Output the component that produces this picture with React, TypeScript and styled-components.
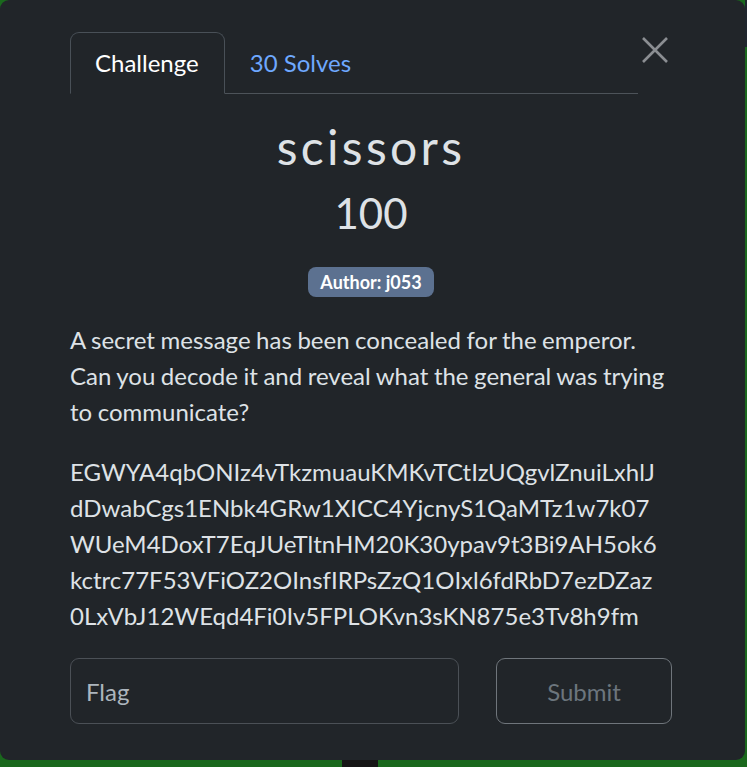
import React from "react";
import styled, { createGlobalStyle } from "styled-components";

const GlobalStyle = createGlobalStyle`
  html, body {
    margin: 0;
    padding: 0;
    background: #1a681d;
    font-family: Lato, "Open Sans", sans-serif;
    -webkit-font-smoothing: antialiased;
  }
  * { box-sizing: border-box; }
`;

const Stage = styled.div`
  display: grid;
  grid-template-columns: 745px 2px;
  grid-template-rows: 760px 7px;
  width: 747px;
  height: 767px;
  overflow: hidden;
`;

const SideShadow = styled.div`
  align-self: start;
  height: 47px;
  background: #1f262e;
`;

const BottomStrip = styled.div`
  grid-column: 1 / span 2;
  display: flex;
  background: #1a681d;
`;

const DarkBlock = styled.div`
  margin-left: 342px;
  width: 36px;
  background: #151515;
`;

const Modal = styled.div`
  background: #212529;
  border-radius: 9px;
  padding: 32px 73px 0 70px;
  color: #dee2e6;
  font-size: 24px;
  line-height: 36px;
`;

const Header = styled.div`
  display: flex;
  align-items: flex-start;
`;

const Tabs = styled.div`
  flex: 1;
  display: flex;
  border-bottom: 1px solid #4d5359;
`;

const Tab = styled.div<{ $active?: boolean }>`
  padding: 12px 25px 12px 24px;
  margin-bottom: -1px;
  border: 1px solid ${(p) => (p.$active ? "#495057" : "transparent")};
  border-bottom-color: ${(p) => (p.$active ? "#212529" : "transparent")};
  border-radius: 9px 9px 0 0;
  background: ${(p) => (p.$active ? "#212529" : "transparent")};
  color: ${(p) => (p.$active ? "#ffffff" : "#6ea8fe")};
  font-size: 24px;
  line-height: 36px;
`;

const CloseButton = styled.button`
  width: 34px;
  height: 34px;
  margin-top: 1px;
  padding: 0;
  border: none;
  background: transparent;
  display: flex;
  align-items: center;
  justify-content: center;
  cursor: pointer;
`;

const Title = styled.h2`
  margin: 0 0 12px;
  padding-top: 24px;
  text-align: center;
  font-size: 48px;
  font-weight: 400;
  line-height: 57.6px;
  letter-spacing: 3.3px;
  color: #dee2e6;
`;

const Value = styled.h3`
  margin: 0;
  text-align: center;
  font-size: 42px;
  font-weight: 400;
  line-height: 50.4px;
  color: #dee2e6;
`;

const BadgeRow = styled.div`
  display: flex;
  justify-content: center;
  margin-top: 29px;
`;

const Badge = styled.span`
  display: inline-block;
  height: 30px;
  padding: 0 12px;
  border-radius: 8px;
  background: #5c7190;
  color: #ffffff;
  font-size: 18px;
  font-weight: 700;
  line-height: 30px;
`;

const Paragraph = styled.p<{ $first?: boolean }>`
  margin: ${(p) => (p.$first ? "25px" : "0")} 0 24px;
  word-spacing: ${(p) => (p.$first ? "-0.6px" : "0")};
`;

const FormRow = styled.div`
  display: flex;
  gap: 37px;
`;

const FlagInput = styled.input`
  flex: 0 0 389px;
  height: 66px;
  padding: 0 15px;
  border: 1px solid #4b5056;
  border-radius: 9px;
  background: #212529;
  color: #dee2e6;
  font-family: Lato, sans-serif;
  font-size: 24px;
  outline: none;
  &::placeholder {
    color: #adb5bd;
  }
`;

const SubmitButton = styled.button`
  flex: 1;
  height: 66px;
  border: 1px solid #6f757b;
  border-radius: 9px;
  background: transparent;
  color: #6c757d;
  font-family: Lato, sans-serif;
  font-size: 24px;
`;

const flagLines = [
  "EGWYA4qbONIz4vTkzmuauKMKvTCtIzUQgvlZnuiLxhlJ",
  "dDwabCgs1ENbk4GRw1XICC4YjcnyS1QaMTz1w7k07",
  "WUeM4DoxT7EqJUeTltnHM20K30ypav9t3Bi9AH5ok6",
  "kctrc77F53VFiOZ2OInsfIRPsZzQ1OIxl6fdRbD7ezDZaz",
  "0LxVbJ12WEqd4Fi0Iv5FPLOKvn3sKN875e3Tv8h9fm",
];

export default function App() {
  return (
    <>
      <GlobalStyle />
      <Stage>
        <Modal>
          <Header>
            <Tabs>
              <Tab $active>Challenge</Tab>
              <Tab>30 Solves</Tab>
            </Tabs>
            <CloseButton aria-label="Close">
              <svg width="28" height="28" viewBox="0 0 28 28">
                <path
                  d="M2 2 L26 26 M26 2 L2 26"
                  stroke="#8b8e92"
                  strokeWidth="2.6"
                  strokeLinecap="butt"
                />
              </svg>
            </CloseButton>
          </Header>
          <Title>scissors</Title>
          <Value>100</Value>
          <BadgeRow>
            <Badge>Author: j053</Badge>
          </BadgeRow>
          <Paragraph $first>
            A secret message has been concealed for the emperor. Can you decode it and reveal
            what the general was trying to communicate?
          </Paragraph>
          <Paragraph>
            {flagLines.map((l, i) => (
              <React.Fragment key={i}>
                {l}
                {i < flagLines.length - 1 && <br />}
              </React.Fragment>
            ))}
          </Paragraph>
          <FormRow>
            <FlagInput placeholder="Flag" />
            <SubmitButton>Submit</SubmitButton>
          </FormRow>
        </Modal>
        <SideShadow />
        <BottomStrip>
          <DarkBlock />
        </BottomStrip>
      </Stage>
    </>
  );
}
